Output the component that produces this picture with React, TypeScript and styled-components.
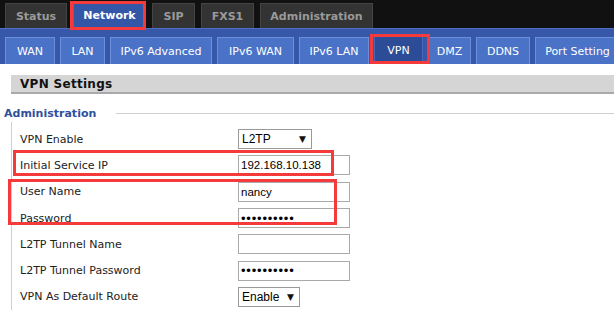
import React from 'react'
import styled, { createGlobalStyle } from 'styled-components'

const GlobalStyle = createGlobalStyle`
  body {
    margin: 0;
    background: #fff;
    font-family: "DejaVu Sans", Verdana, sans-serif;
  }
`

const Page = styled.div`
  position: relative;
  width: 614px;
  height: 310px;
  overflow: hidden;
  background: #fff;
`

const TopBar = styled.div`
  height: 28px;
  background: #111;
  display: flex;
  align-items: flex-end;
  gap: 6px;
  padding-left: 5px;
`

const Tab = styled.div<{ $w: number; $active?: boolean }>`
  width: ${p => p.$w}px;
  height: ${p => (p.$active ? 27 : 25)}px;
  box-sizing: border-box;
  display: flex;
  align-items: center;
  justify-content: center;
  font-size: 11px;
  font-weight: bold;
  color: ${p => (p.$active ? '#fff' : '#9a9a9a')};
  background: ${p => (p.$active ? '#3356a6' : '#333')};
  border: 1px solid ${p => (p.$active ? '#4a6cc0' : '#444')};
  border-bottom: none;
`

const NavBar = styled.div`
  height: 36px;
  box-sizing: border-box;
  background: #3757a8;
  border-top: 1px solid #4b6ec4;
  display: flex;
  align-items: flex-end;
  gap: 5px;
  padding-left: 5px;
  white-space: nowrap;
`

const NavButton = styled.div<{ $w: number; $active?: boolean }>`
  flex: none;
  width: ${p => p.$w}px;
  height: ${p => (p.$active ? 29 : 27)}px;
  box-sizing: border-box;
  display: flex;
  align-items: center;
  justify-content: center;
  font-size: 11px;
  color: #fff;
  background: ${p => (p.$active ? '#2d4c97' : '#4a72c7')};
  border: 1px solid ${p => (p.$active ? '#4869b8' : '#6d90dc')};
  border-bottom: none;
`

const Content = styled.div`
  padding: 11px 0 0 4px;
`

const SectionBar = styled.div`
  margin-left: 7px;
  height: 19px;
  box-sizing: border-box;
  background: #d5d5d5;
  border-bottom: 2px solid #a9a9a9;
  padding-left: 9px;
  display: flex;
  align-items: center;
  font-size: 12px;
  font-weight: bold;
  color: #111;
  letter-spacing: 0.3px;
`

const LegendRow = styled.div`
  margin-top: 10px;
  height: 18px;
  display: flex;
  align-items: center;
  gap: 20px;
`

const LegendText = styled.span`
  font-size: 11px;
  font-weight: bold;
  color: #2f4f9c;
`

const LegendLine = styled.div`
  flex: 1;
  height: 1px;
  background: #cfcfcf;
`

const FieldBox = styled.div`
  margin-left: 7px;
  border-left: 1px solid #cfcfcf;
  padding: 4px 0 0 8px;
  height: 200px;
`

const Row = styled.div`
  height: 26.3px;
  display: flex;
  align-items: center;
`

const Label = styled.div`
  width: 218px;
  font-size: 11px;
  color: #222;
`

const TextInput = styled.input`
  width: 112px;
  height: 20px;
  box-sizing: border-box;
  border: 1px solid #aaa;
  padding: 0 2px;
  font-family: "Liberation Sans", Arial, sans-serif;
  font-size: 11.5px;
  color: #000;
  outline: none;
  &[type='password'] {
    letter-spacing: 0.8px;
    font-size: 13px;
  }
`

const SelectBox = styled.div<{ $w: number }>`
  width: ${p => p.$w}px;
  height: 20px;
  box-sizing: border-box;
  border: 1px solid #999;
  display: flex;
  align-items: center;
  padding-right: 5px;
`

const Select = styled.select`
  flex: 1;
  min-width: 0;
  appearance: none;
  border: none;
  background: transparent;
  padding: 0 0 0 3px;
  font-family: "Liberation Sans", Arial, sans-serif;
  font-size: 12px;
  color: #000;
  outline: none;
`

const Arrow = styled.span`
  font-size: 9px;
  color: #111;
`

const Mark = styled.div<{ $x: number; $y: number; $w: number; $h: number }>`
  position: absolute;
  left: ${p => p.$x}px;
  top: ${p => p.$y}px;
  width: ${p => p.$w}px;
  height: ${p => p.$h}px;
  box-sizing: border-box;
  border: 3px solid #f43a3a;
  pointer-events: none;
`

const tabs = [
  { name: 'Status', w: 62 },
  { name: 'Network', w: 73, active: true },
  { name: 'SIP', w: 43 },
  { name: 'FXS1', w: 53 },
  { name: 'Administration', w: 113 },
]

const navItems = [
  { name: 'WAN', w: 50 },
  { name: 'LAN', w: 45 },
  { name: 'IPv6 Advanced', w: 102 },
  { name: 'IPv6 WAN', w: 77 },
  { name: 'IPv6 LAN', w: 70 },
  { name: 'VPN', w: 49, active: true },
  { name: 'DMZ', w: 43 },
  { name: 'DDNS', w: 54 },
  { name: 'Port Setting', w: 85 },
]

export default function App() {
  return (
    <>
      <GlobalStyle />
      <Page>
        <TopBar>
          {tabs.map(t => (
            <Tab key={t.name} $w={t.w} $active={t.active}>{t.name}</Tab>
          ))}
        </TopBar>
        <NavBar>
          {navItems.map(n => (
            <NavButton key={n.name} $w={n.w} $active={n.active}>{n.name}</NavButton>
          ))}
        </NavBar>
        <Content>
          <SectionBar>VPN Settings</SectionBar>
          <LegendRow>
            <LegendText>Administration</LegendText>
            <LegendLine />
          </LegendRow>
          <FieldBox>
            <Row>
              <Label>VPN Enable</Label>
              <SelectBox $w={74}>
                <Select defaultValue="L2TP">
                  <option>Disable</option>
                  <option>L2TP</option>
                  <option>PPTP</option>
                </Select>
                <Arrow>▼</Arrow>
              </SelectBox>
            </Row>
            <Row>
              <Label>Initial Service IP</Label>
              <TextInput type="text" defaultValue="192.168.10.138" />
            </Row>
            <Row>
              <Label>User Name</Label>
              <TextInput type="text" defaultValue="nancy" />
            </Row>
            <Row>
              <Label>Password</Label>
              <TextInput type="password" defaultValue="1234567890" />
            </Row>
            <Row>
              <Label>L2TP Tunnel Name</Label>
              <TextInput type="text" defaultValue="" />
            </Row>
            <Row>
              <Label>L2TP Tunnel Password</Label>
              <TextInput type="password" defaultValue="1234567890" />
            </Row>
            <Row>
              <Label>VPN As Default Route</Label>
              <SelectBox $w={62}>
                <Select defaultValue="Enable">
                  <option>Enable</option>
                  <option>Disable</option>
                </Select>
                <Arrow>▼</Arrow>
              </SelectBox>
            </Row>
          </FieldBox>
        </Content>
        <Mark $x={70} $y={1} $w={76} $h={29} />
        <Mark $x={370} $y={34} $w={60} $h={30} />
        <Mark $x={13} $y={150} $w={321} $h={26} />
        <Mark $x={8} $y={179} $w={329} $h={46} />
      </Page>
    </>
  )
}
